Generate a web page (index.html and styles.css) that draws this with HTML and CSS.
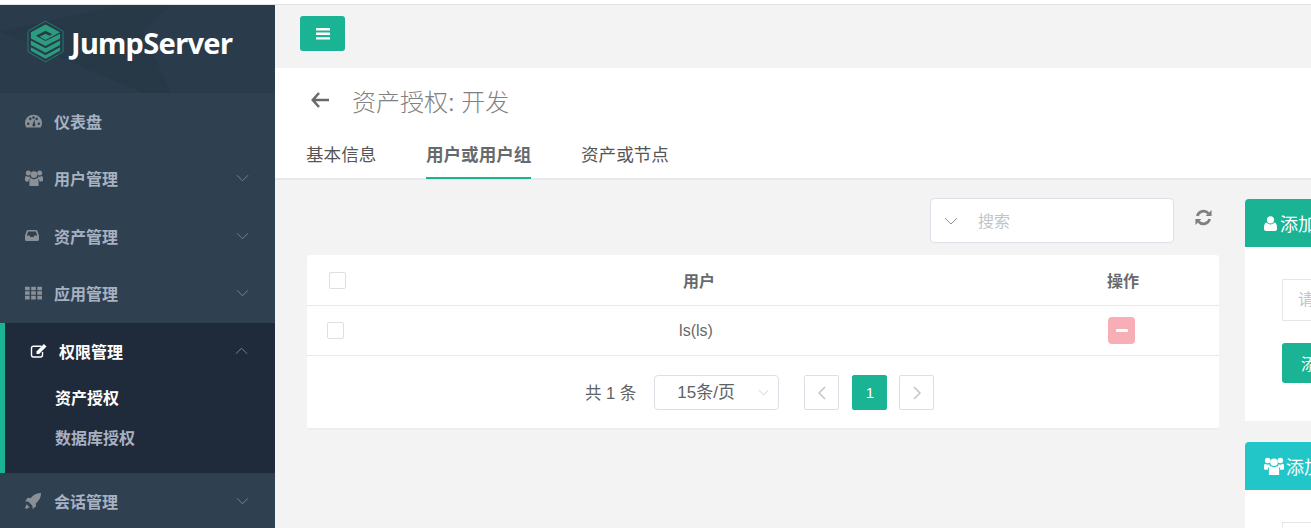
FILE: index.html
```html
<!DOCTYPE html>
<html lang="zh-CN">
<head>
  <meta charset="UTF-8" />
  <meta name="viewport" content="width=device-width, initial-scale=1.0"/>
  <title>JumpServer</title>
  <link rel="stylesheet" href="styles.css">
</head>
<body>
  <svg class="defs" width="0" height="0" aria-hidden="true">
    <symbol id="i-down" viewBox="0 0 14 8"><path d="M1 1l6 6 6-6" fill="none" stroke="currentColor" stroke-width="1"/></symbol>
    <symbol id="i-up" viewBox="0 0 14 8"><path d="M1 7l6-6 6 6" fill="none" stroke="currentColor" stroke-width="1"/></symbol>
    <symbol id="i-users" viewBox="0 0 18 16">
      <circle cx="9" cy="4.6" r="3.4"/><circle cx="3.3" cy="3" r="2.5"/><circle cx="14.7" cy="3" r="2.5"/>
      <path d="M4.4 16V11Q4.4 8.2 6.4 8.2 7.6 9.2 9 9.2T11.6 8.2Q13.6 8.2 13.6 11V16Z"/>
      <path d="M0 10V8Q0 6 1.4 6 2.4 6.8 3.4 6.8T4.9 6.4Q5 8 5.8 8.4 3.4 8.8 3.4 11.4H1Q0 11.4 0 10ZM18 10V8Q18 6 16.6 6 15.6 6.8 14.6 6.8T13.1 6.4Q13 8 12.2 8.4 14.6 8.8 14.6 11.4H17Q18 11.4 18 10Z"/>
    </symbol>
  </svg>

  <div class="top-strip"></div>

  <div class="app">
    <!-- 侧边栏 -->
    <aside class="sidebar">
      <div class="logo">
        <svg class="logo-mark" viewBox="0 0 38 44">
          <path d="M19 1L37 11.5V32.5L19 43 1 32.5V11.5Z" fill="none" stroke="#1f7f74" stroke-width="1"/>
          <path d="M19 4.5L34 12.5 19 20.5 13 17.2 19 14 23.2 16.2 26 14.6 19 11 9.2 16.2 19 21.4 34 14V18.8L19 26.6 4 18.8V12.5Z" fill="#2c9c80"/>
          <path d="M4 21L19 29 34 21V25.6L19 33.6 4 25.6Z" fill="#2c9c80"/>
          <path d="M4 28L19 36 34 28V31.4L19 39.6 4 31.4Z" fill="#2c9c80"/>
        </svg>
        <span class="logo-text">JumpServer</span>
      </div>
      <nav class="menu">
        <a class="menu-item">
          <svg class="menu-icon" viewBox="0 0 16 12"><path d="M8 0A8 8 0 0 0 0 8Q0 10.2 1.2 12H14.8Q16 10.2 16 8A8 8 0 0 0 8 0ZM3 7.4A1.2 1.2 0 1 1 3 9.8 1.2 1.2 0 0 1 3 7.4ZM5 2.8A1.2 1.2 0 1 1 5 5.2 1.2 1.2 0 0 1 5 2.8ZM8 1.6A1.2 1.2 0 1 1 8 4 1.2 1.2 0 0 1 8 1.6ZM11 2.8A1.2 1.2 0 1 1 11 5.2 1.2 1.2 0 0 1 11 2.8ZM13 7.4A1.2 1.2 0 1 1 13 9.8 1.2 1.2 0 0 1 13 7.4ZM9 4.6L9.4 8.6A1.5 1.5 0 1 1 7.2 8.8Z" fill-rule="evenodd"/></svg>
          <span>仪表盘</span>
        </a>
        <a class="menu-item">
          <svg class="menu-icon tall"><use href="#i-users"/></svg>
          <span>用户管理</span>
          <svg class="caret"><use href="#i-down"/></svg>
        </a>
        <a class="menu-item">
          <svg class="menu-icon inbox" viewBox="0 0 14 11"><path d="M3 0H11Q12 0 12.4 1L14 5.5V9.5Q14 11 12.5 11H1.5Q0 11 0 9.5V5.5L1.6 1Q2 0 3 0ZM3.2 1.5L1.8 5.5H4.6L5.4 7H8.6L9.4 5.5H12.2L10.8 1.5Z" fill-rule="evenodd"/></svg>
          <span>资产管理</span>
          <svg class="caret"><use href="#i-down"/></svg>
        </a>
        <a class="menu-item">
          <svg class="menu-icon" viewBox="0 0 16 12"><path d="M0 0H4.4V3.4H0ZM5.8 0H10.2V3.4H5.8ZM11.6 0H16V3.4H11.6ZM0 4.3H4.4V7.7H0ZM5.8 4.3H10.2V7.7H5.8ZM11.6 4.3H16V7.7H11.6ZM0 8.6H4.4V12H0ZM5.8 8.6H10.2V12H5.8ZM11.6 8.6H16V12H11.6Z"/></svg>
          <span>应用管理</span>
          <svg class="caret"><use href="#i-down"/></svg>
        </a>
        <div class="menu-group">
          <a class="menu-item active">
            <svg class="menu-icon" viewBox="0 0 16 14"><path d="M11 2.2H3Q1 2.2 1 4.2V11Q1 13 3 13H10Q12 13 12 11V8" fill="none" stroke="currentColor" stroke-width="1.4"/><path d="M13.4 0L16 2.6 8.6 10H6V7.4Z"/></svg>
            <span>权限管理</span>
            <svg class="caret"><use href="#i-up"/></svg>
          </a>
          <a class="sub-item current">资产授权</a>
          <a class="sub-item">数据库授权</a>
        </div>
        <a class="menu-item">
          <svg class="menu-icon rocket" viewBox="0 0 15 15"><path d="M15 0Q15 5 11.5 8.5L10 10 10.5 12.5 7 15 7 12 3 8H0L2.5 4.5 5 5 6.5 3.5Q10 0 15 0Z"/><path d="M1.6 10.6L4.4 13.4 1 15 0 14Z"/></svg>
          <span>会话管理</span>
          <svg class="caret"><use href="#i-down"/></svg>
        </a>
      </nav>
    </aside>

    <!-- 主内容 -->
    <main class="main">
      <div class="topbar">
        <button class="toggle">
          <svg viewBox="0 0 14 12" width="14" height="12"><path d="M0 0H14V2.4H0ZM0 4.6H14V7H0ZM0 9.2H14V11.6H0Z" fill="#fff"/></svg>
        </button>
      </div>

      <div class="page-head">
        <div class="title-row">
          <svg class="back" viewBox="0 0 18 16"><path d="M8 1L1.8 8 8 15M2 8H18" fill="none" stroke="currentColor" stroke-width="2.6"/></svg>
          <h1>资产授权: 开发</h1>
        </div>
        <div class="tabs">
          <a class="tab">基本信息</a>
          <a class="tab on">用户或用户组</a>
          <a class="tab">资产或节点</a>
        </div>
      </div>

      <div class="body">
        <section class="left">
          <div class="toolbar">
            <div class="search">
              <svg class="search-caret"><use href="#i-down"/></svg>
              <span>搜索</span>
            </div>
            <svg class="refresh" viewBox="0 0 16 16"><path d="M2.2 6.6A6 6 0 0 1 12.6 4.2M13.8 9.4A6 6 0 0 1 3.4 11.8" fill="none" stroke="currentColor" stroke-width="2.6"/><path d="M15.6 1V6.6H10ZM.4 15V9.4H6Z"/></svg>
          </div>

          <div class="table-card">
            <div class="row head">
              <div class="cell"><i class="check"></i></div>
              <div class="cell">用户</div>
              <div class="cell">操作</div>
            </div>
            <div class="row item">
              <div class="cell"><i class="check small"></i></div>
              <div class="cell">ls(ls)</div>
              <div class="cell"><button class="del"><b></b></button></div>
            </div>
            <div class="pager">
              <span class="total">共 1 条</span>
              <div class="size">15条/页<svg><use href="#i-down"/></svg></div>
              <a class="pg"><svg viewBox="0 0 8 14"><path d="M7 1L1 7l6 6" fill="none" stroke="currentColor" stroke-width="1.5"/></svg></a>
              <a class="pg cur">1</a>
              <a class="pg"><svg viewBox="0 0 8 14"><path d="M1 1l6 6-6 6" fill="none" stroke="currentColor" stroke-width="1.5"/></svg></a>
            </div>
          </div>
        </section>

        <section class="right">
          <div class="panel">
            <div class="panel-head green">
              <svg class="panel-icon" viewBox="0 0 13 15" width="13" height="15"><circle cx="6.5" cy="3.8" r="3.6"/><path d="M2.4 6.6Q4 8.4 6.5 8.4T10.6 6.6Q13 7.4 13 11.5V13Q13 15 11 15H2Q0 15 0 13V11.5Q0 7.4 2.4 6.6Z"/></svg>
              <span>添加用户</span>
            </div>
            <div class="panel-body">
              <div class="fake-input">请选择用户</div>
              <button class="add">添加</button>
            </div>
          </div>
          <div class="panel">
            <div class="panel-head cyan">
              <svg class="panel-icon wide"><use href="#i-users"/></svg>
              <span>添加用户组</span>
            </div>
            <div class="panel-body">
              <div class="fake-input">请选择用户组</div>
            </div>
          </div>
        </section>
      </div>
    </main>
  </div>
</body>
</html>
```

FILE: styles.css
```css
html, body {
  margin: 0;
  padding: 0;
  height: 100%;
  overflow: hidden;
}

body {
  font-family: "Liberation Sans", "Noto Sans CJK SC", sans-serif;
  color: #676a6c;
  background-color: #f3f3f4;
}

.defs {
  position: absolute;
}

.top-strip {
  height: 5px;
  box-sizing: border-box;
  background-color: #fff;
  border-bottom: 1px solid #e2e2e2;
}

.app {
  display: flex;
  height: 523px;
  overflow: hidden;
}

/* 侧边栏 */
.sidebar {
  width: 275px;
  flex: none;
  background-color: #2f4050;
}

.logo {
  position: relative;
  height: 88px;
  box-sizing: border-box;
  padding: 15px 0 0 27px;
  display: flex;
  align-items: flex-start;
  gap: 6px;
  background-color: #2a3b4b;
  overflow: hidden;
}

.logo::before {
  content: "";
  position: absolute;
  left: 0;
  right: 0;
  top: 0;
  bottom: 0;
  background-color: #273846;
  clip-path: polygon(0 30%, 52% 100%, 62% 100%, 52% 30%, 62% 0, 45% 0);
}

.logo-mark {
  position: relative;
  width: 37px;
  height: 43px;
  flex: none;
}

.logo-text {
  position: relative;
  font-family: "Noto Sans", sans-serif;
  font-weight: 700;
  font-size: 29px;
  line-height: 45px;
  letter-spacing: -.7px;
  margin-left: 1px;
  color: #fff;
}

.menu-item {
  display: flex;
  align-items: center;
  height: 57.5px;
  box-sizing: border-box;
  padding: 0 25px 2px;
  font-size: 16px;
  font-weight: 700;
  color: #a7b1c2;
}

.menu-icon {
  width: 17px;
  height: 14px;
  fill: #8b9096;
  margin-right: 12px;
  flex: none;
}

.menu-icon.tall {
  width: 18px;
  height: 16px;
  margin-right: 11px;
}

.menu-icon.inbox {
  width: 14px;
  height: 11px;
  margin-right: 15px;
}

.menu-icon.rocket {
  width: 16px;
  height: 16px;
  margin-right: 13px;
}

.caret {
  width: 13px;
  height: 8px;
  margin-left: auto;
  margin-right: 1px;
  color: #7b8794;
}

.menu-group {
  background-color: #1f2b3a;
  border-left: 5px solid #1ab394;
  height: 150px;
  box-sizing: border-box;
}

.menu-item.active {
  height: 58px;
  color: #fff;
  padding-right: 26px;
}

.menu-item.active .menu-icon {
  fill: #fff;
  color: #fff;
  margin-right: 12px;
}

.sub-item {
  display: block;
  height: 40px;
  line-height: 40px;
  padding-left: 50px;
  font-size: 16px;
  font-weight: 700;
  color: #a7b1c2;
}

.sub-item.current {
  color: #fff;
  margin-top: -2px;
}

/* 主内容 */
.main {
  flex: 1;
  min-width: 0;
}

.topbar {
  height: 63px;
  box-sizing: border-box;
  padding: 11px 25px 0;
}

.toggle {
  display: flex;
  align-items: center;
  justify-content: center;
  width: 45px;
  height: 35px;
  padding: 0;
  border: none;
  border-radius: 3px;
  background-color: #1ab394;
}

.page-head {
  height: 112px;
  box-sizing: border-box;
  background-color: #fff;
  border-bottom: 2px solid #e7eaec;
  padding: 0 31px;
}

.title-row {
  display: flex;
  align-items: center;
  height: 68px;
  padding: 0 0 4px 5px;
  box-sizing: border-box;
}

.back {
  width: 18px;
  height: 16px;
  color: #6a6a6a;
  margin-right: 23px;
}

h1 {
  margin: 0;
  font-size: 24px;
  font-weight: 300;
  color: #7f8183;
}

.tabs {
  display: flex;
  gap: 49.5px;
}

.tab {
  height: 42px;
  line-height: 38px;
  box-sizing: border-box;
  font-size: 17.6px;
  color: #555;
}

.tab.on {
  font-weight: 700;
  color: #676a6c;
  border-bottom: 2px solid #1ab394;
  height: 43px;
}

.body {
  display: grid;
  grid-template-columns: 912px 300px;
  gap: 26px;
  padding: 18px 0 0 32px;
}

.toolbar {
  display: flex;
  justify-content: flex-end;
  align-items: flex-start;
  height: 57px;
  padding-right: 7px;
}

.search {
  width: 244px;
  height: 45px;
  box-sizing: border-box;
  display: flex;
  align-items: center;
  padding-bottom: 2px;
  background-color: #fff;
  border: 1px solid #dcdfe6;
  border-radius: 4px;
  font-size: 16px;
  color: #c0c4cc;
}

.search-caret {
  width: 14px;
  height: 8px;
  margin: 2px 20px 0 13px;
  color: #909399;
}

.refresh {
  width: 17px;
  height: 17px;
  margin: 11px 0 0 21px;
  color: #7f7f7f;
  fill: #7f7f7f;
}

.table-card {
  background-color: #fff;
  border-radius: 3px;
  border-bottom: 2px solid #ebeef1;
  height: 175px;
  box-sizing: border-box;
}

.row {
  display: grid;
  align-items: center;
  text-align: center;
  box-sizing: border-box;
  border-bottom: 1px solid #e7eaec;
  font-size: 16px;
}

.row.head {
  grid-template-columns: 64px 656px 192px;
  height: 51px;
  font-weight: 700;
}

.row.item {
  grid-template-columns: 61px 656px 195px;
  height: 50px;
}

.check {
  display: block;
  width: 15px;
  height: 15px;
  margin-left: 22px;
  border: 1px solid #dcdfe6;
  border-radius: 2px;
}

.check.small {
  margin-left: 20px;
}

.del {
  display: block;
  width: 27px;
  height: 27px;
  margin: 0 auto;
  padding: 0;
  border: none;
  border-radius: 4px;
  background-color: #f8aeb5;
}

.del b {
  display: block;
  width: 12px;
  height: 3px;
  margin: 0 auto;
  border-radius: 1px;
  background-color: #fff;
}

.pager {
  display: flex;
  align-items: center;
  padding: 19px 0 0 278px;
  font-size: 16.5px;
  color: #606266;
}

.total {
  margin-right: 18px;
  padding-bottom: 2px;
}

.size {
  width: 125px;
  height: 35px;
  box-sizing: border-box;
  border: 1px solid #dcdfe6;
  border-radius: 4px;
  padding-left: 22px;
  font-size: 17px;
  line-height: 33px;
  position: relative;
  margin-right: 25px;
}

.size svg {
  position: absolute;
  right: 9px;
  top: 13px;
  width: 11px;
  height: 7px;
  color: #c0c4cc;
}

.pg {
  width: 35px;
  height: 35px;
  box-sizing: border-box;
  border: 1px solid #dcdfe6;
  border-radius: 2px;
  display: flex;
  align-items: center;
  justify-content: center;
  margin-right: 13px;
  color: #c0c4cc;
  font-size: 15px;
}

.pg svg {
  width: 8px;
  height: 14px;
}

.pg.cur {
  background-color: #1ab394;
  border-color: #1ab394;
  color: #fff;
  margin-right: 12px;
}

.panel {
  margin-top: 1px;
  margin-bottom: 21px;
  background-color: #fff;
  border-radius: 4px 4px 0 0;
}

.panel-head {
  display: flex;
  align-items: center;
  height: 48px;
  padding-left: 19px;
  font-size: 18px;
  color: #fff;
  border-radius: 4px 4px 0 0;
}

.panel-head.green {
  background-color: #1ab394;
}

.panel-head.cyan {
  background-color: #23c6c8;
}

.panel-icon {
  fill: #fff;
  margin-right: 3px;
}

.panel-icon.wide {
  width: 20px;
  height: 18px;
  margin-right: 2px;
}

.panel-body {
  padding: 32px 37px 38px;
  height: 174px;
  box-sizing: border-box;
}

.fake-input {
  height: 42px;
  line-height: 40px;
  box-sizing: border-box;
  border: 1px solid #e5e6e7;
  padding-left: 15px;
  font-size: 16px;
  color: #c0c4cc;
}

.add {
  display: block;
  margin-top: 22px;
  width: 70px;
  height: 40px;
  border: none;
  border-radius: 3px;
  background-color: #1ab394;
  color: #fff;
  font-family: inherit;
  font-size: 16px;
}
```
